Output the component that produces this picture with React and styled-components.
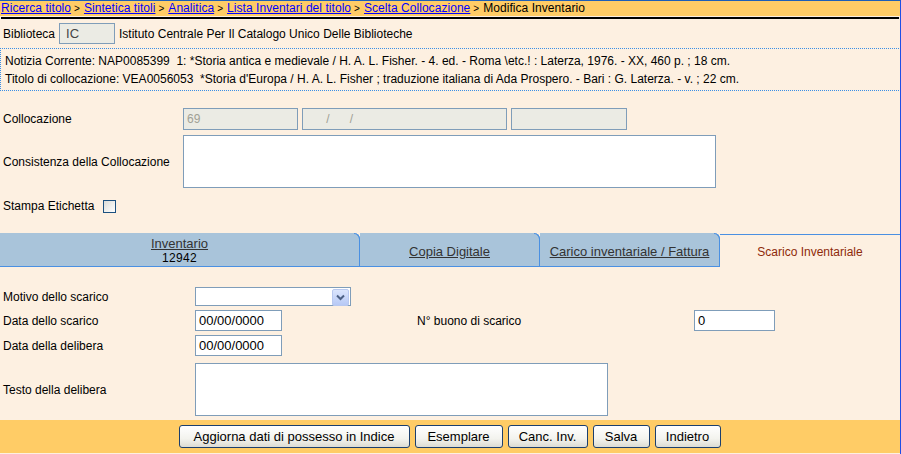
import React from "react";
import styled, { createGlobalStyle } from "styled-components";

const GlobalStyle = createGlobalStyle`
  html, body {
    margin: 0;
    padding: 0;
    background: #ffffff;
  }
  body {
    font-family: "Liberation Sans", Arial, sans-serif;
    font-size: 12px;
    color: #000;
  }
`;

const Page = styled.div`
  width: 900px;
  height: 453px;
  border-right: 1px solid #1f4fe6;
  border-top: 1px solid #1d5fb8;
  background: #fdf0e1;
  display: flex;
  flex-direction: column;
`;

const Crumbs = styled.div`
  height: 15px;
  line-height: 15px;
  background: #ffcc66;
  padding-left: 1px;
  font-size: 12px;
  letter-spacing: 0.05px;
  white-space: nowrap;
  a {
    color: #0000ff;
    text-decoration: underline;
  }
`;

const Sep = styled.span`
  font-size: 10px;
  padding: 0 4px 0 3px;
`;

const Rule = styled.div`
  height: 2px;
  margin: 1px 1px 0 1px;
  background: #000;
`;

const LibRow = styled.div`
  display: flex;
  align-items: center;
  gap: 4px;
  padding: 4px 0 0 3px;
  height: 21px;
`;

const Field = styled.div`
  box-sizing: border-box;
  width: ${(p) => p.$w}px;
  height: ${(p) => p.$h || 21}px;
  border: 1px solid #7f9db9;
  background: ${(p) => (p.$disabled ? "#ebebe4" : "#fff")};
  color: ${(p) => (p.$disabled ? "#a0a095" : "#000")};
  font-size: ${(p) => (p.$big ? 13 : 12)}px;
  line-height: ${(p) => (p.$h || 21) - 2}px;
  padding-left: ${(p) => p.$pad ?? 3}px;
  margin-top: ${(p) => p.$mt || 0}px;
  white-space: pre;
`;

const InfoBox = styled.div`
  margin-top: 4px;
  border-top: 1px dotted #3a8ee6;
  border-bottom: 1px dotted #3a8ee6;
  border-left: 1px dotted #3a8ee6;
  margin-right: 1px;
  padding: 3px 0 2px 4px;
  display: flex;
  flex-direction: column;
`;

const InfoLine = styled.div`
  height: 18px;
  line-height: 18px;
  white-space: pre;
`;

const FormGrid = styled.div`
  display: grid;
  grid-template-columns: ${(p) => p.$label}px 1fr;
  row-gap: ${(p) => p.$gap}px;
  align-items: center;
  padding-left: 3px;
  margin-top: ${(p) => p.$top}px;
`;

const Label = styled.div`
  white-space: nowrap;
  display: flex;
  align-items: center;
  gap: 9px;
  padding-top: ${(p) => p.$pt || 0}px;
`;

const Inline = styled.div`
  display: flex;
  align-items: center;
  gap: 4px;
`;

const Check = styled.span`
  box-sizing: border-box;
  width: 13px;
  height: 13px;
  border: 1px solid #1c5180;
  background: linear-gradient(135deg, #dcdcd7, #fff);
  display: inline-block;
`;

const Tabs = styled.div`
  margin-top: 20px;
  display: flex;
  height: 34px;
`;

const Tab = styled.div`
  position: relative;
  box-sizing: border-box;
  width: ${(p) => p.$w}px;
  background: #a9c4da;
  border-right: 1px solid #4a90e2;
  border-bottom: 1px solid #4a90e2;
  border-top-right-radius: 6px;
  display: flex;
  flex-direction: column;
  align-items: center;
  justify-content: center;
  color: #333;
  font-size: 13px;
  line-height: 15px;
  padding-top: 3px;
  &::after {
    content: "";
    position: absolute;
    top: 0;
    right: -1px;
    width: 6px;
    height: 6px;
    border-top: 1px solid #4a90e2;
    border-right: 1px solid #4a90e2;
    border-top-right-radius: 6px;
    box-sizing: border-box;
  }
`;

const TabLink = styled.span`
  text-decoration: underline;
`;

const TabNum = styled.span`
  color: #000;
  font-size: 12px;
  letter-spacing: 0.3px;
`;

const ActiveTab = styled.div`
  flex: 1;
  margin-top: 1px;
  border-top: 1px solid #4a90e2;
  display: flex;
  justify-content: center;
  padding-top: 10px;
  color: #8e2a0a;
`;

const ScaricoRow = styled.div`
  display: flex;
  align-items: center;
`;

const BuonoLabel = styled.span`
  margin-left: 135px;
  width: 277px;
`;

const Select = styled.div`
  box-sizing: border-box;
  width: 156px;
  height: 19px;
  border: 1px solid #7f9db9;
  background: #fff;
  display: flex;
  justify-content: flex-end;
  padding: 1px;
`;

const SelectBtn = styled.div`
  width: 15px;
  height: 15px;
  border: 1px solid #b8c8ef;
  border-radius: 2px;
  background: linear-gradient(#dbe5fd, #b7c9f5);
  display: flex;
  align-items: center;
  justify-content: center;
`;

const Footer = styled.div`
  margin-top: 4px;
  height: 33px;
  background: #ffcc66;
  display: flex;
  align-items: center;
  justify-content: center;
  gap: 5px;
  padding-right: 1px;
`;

const Button = styled.button`
  height: 23px;
  width: ${(p) => p.$w}px;
  box-sizing: border-box;
  font-family: "Liberation Sans", Arial, sans-serif;
  font-size: 13px;
  color: #000;
  border: 1px solid #1c3f6e;
  border-radius: 3px;
  background: linear-gradient(#ffffff, #f3f3ee 60%, #dcdcd3);
  padding: 0;
`;

export default function App() {
  return (
    <>
      <GlobalStyle />
      <Page>
        <Crumbs>
          <a>Ricerca titolo</a>
          <Sep>&gt;</Sep>
          <a>Sintetica titoli</a>
          <Sep>&gt;</Sep>
          <a>Analitica</a>
          <Sep>&gt;</Sep>
          <a>Lista Inventari del titolo</a>
          <Sep>&gt;</Sep>
          <a>Scelta Collocazione</a>
          <Sep>&gt;</Sep>
          Modifica Inventario
        </Crumbs>
        <Rule />

        <LibRow>
          <span>Biblioteca</span>
          <Field $w={56} $disabled $big $pad={6} style={{ color: "#444" }}>
            IC
          </Field>
          <span>Istituto Centrale Per Il Catalogo Unico Delle Biblioteche</span>
        </LibRow>

        <InfoBox>
          <InfoLine>
            {"Notizia Corrente: NAP0085399  1: *Storia antica e medievale / H. A. L. Fisher. - 4. ed. - Roma \\etc.! : Laterza, 1976. - XX, 460 p. ; 18 cm."}
          </InfoLine>
          <InfoLine>
            {"Titolo di collocazione: VEA0056053  *Storia d'Europa / H. A. L. Fisher ; traduzione italiana di Ada Prospero. - Bari : G. Laterza. - v. ; 22 cm."}
          </InfoLine>
        </InfoBox>

        <FormGrid $label={180} $gap={5} $top={17}>
          <Label>Collocazione</Label>
          <Inline>
            <Field $w={115} $h={22} $disabled>69</Field>
            <Field $w={205} $h={22} $disabled $pad={0}>
              {"       /      /"}
            </Field>
            <Field $w={116} $h={22} $disabled />
          </Inline>
          <Label>Consistenza della Collocazione</Label>
          <Field $w={533} $h={53} />
        </FormGrid>

        <FormGrid $label={180} $gap={0} $top={11}>
          <Label>
            Stampa Etichetta
            <Check />
          </Label>
          <span />
        </FormGrid>

        <Tabs>
          <Tab $w={360}>
            <TabLink>Inventario</TabLink>
            <TabNum>12942</TabNum>
          </Tab>
          <Tab $w={180}>
            <TabLink>Copia Digitale</TabLink>
          </Tab>
          <Tab $w={180}>
            <TabLink>Carico inventariale / Fattura</TabLink>
          </Tab>
          <ActiveTab>Scarico Inventariale</ActiveTab>
        </Tabs>

        <FormGrid $label={192} $gap={4} $top={20}>
          <Label>Motivo dello scarico</Label>
          <Select>
            <SelectBtn>
              <svg width="9" height="7" viewBox="0 0 9 7">
                <path d="M1 1.5 L4.5 5 L8 1.5" fill="none" stroke="#4d6185" strokeWidth="2" />
              </svg>
            </SelectBtn>
          </Select>
          <Label>Data dello scarico</Label>
          <ScaricoRow>
            <Field $w={87} $big>00/00/0000</Field>
            <BuonoLabel>N° buono di scarico</BuonoLabel>
            <Field $w={81} $big>0</Field>
          </ScaricoRow>
          <Label>Data della delibera</Label>
          <Field $w={87} $big>00/00/0000</Field>
          <Label $pt={4}>Testo della delibera</Label>
          <Field $w={413} $h={53} $mt={3} />
        </FormGrid>

        <Footer>
          <Button $w={231}>Aggiorna dati di possesso in Indice</Button>
          <Button $w={88}>Esemplare</Button>
          <Button $w={80}>Canc. Inv.</Button>
          <Button $w={57}>Salva</Button>
          <Button $w={66}>Indietro</Button>
        </Footer>
      </Page>
    </>
  );
}
